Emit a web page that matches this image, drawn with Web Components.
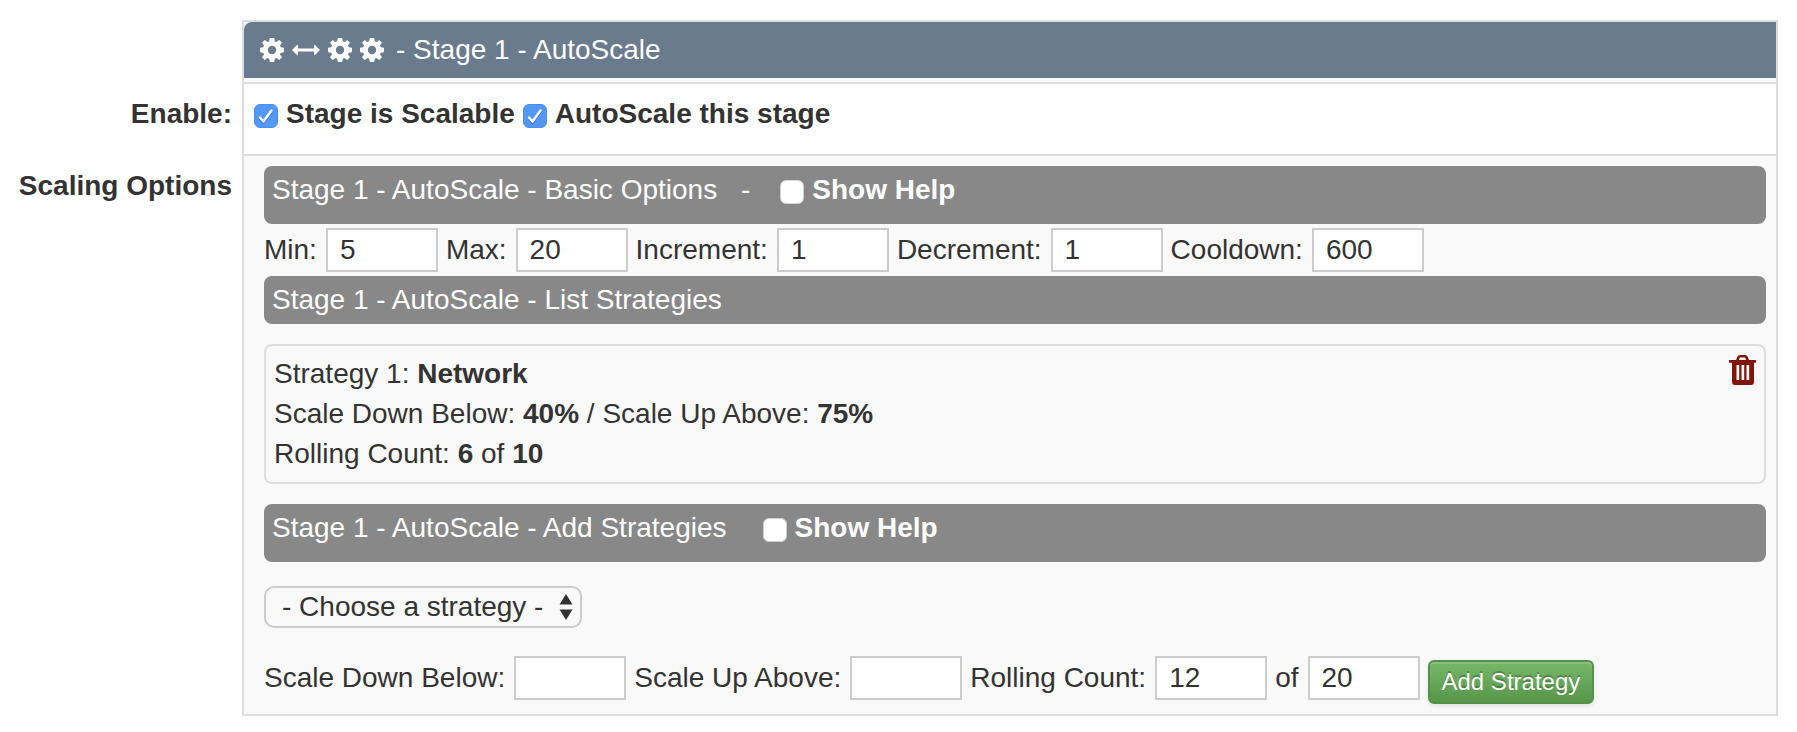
<!DOCTYPE html>
<html lang="en">
<head>
<meta charset="utf-8">
<title>Stage AutoScale</title>
<style>
  body { margin: 0; background: #fff; color: #333; font: 28px/40px "Liberation Sans", Arial, sans-serif; }
</style>
</head>
<body>
<scale-form></scale-form>

<template id="t-form">
  <style>
    :host { display: block; padding: 20px 19px 16px 0; }
    .fields, .add { display: flex; align-items: flex-start; flex-wrap: wrap; gap: 8px; }
    .fields { margin: 4px 0; }
    .add { margin-top: 28px; }
    .checks { display: flex; gap: 8px; padding: 10px 10px 20px; }
    .options { padding: 10px 10px 10px 20px; }
    strategy-card { margin: 20px 0; }
    strategy-select { margin-top: 24px; }
    .dash { margin-left: 16px; }
    .adding { --help-gap: 36px; }
  </style>
  <form-row top>
    <stage-header slot="content">- Stage 1 - AutoScale</stage-header>
  </form-row>
  <form-row label="Enable:" plain>
    <div slot="content" class="checks">
      <check-field checked>Stage is Scalable</check-field>
      <check-field checked>AutoScale this stage</check-field>
    </div>
  </form-row>
  <form-row label="Scaling Options">
    <div slot="content" class="options">
      <section-bar tall>Stage 1 - AutoScale - Basic Options <span class="dash">-</span> <check-field slot="help">Show Help</check-field></section-bar>
      <div class="fields">
        <number-field label="Min:" value="5"></number-field>
        <number-field label="Max:" value="20"></number-field>
        <number-field label="Increment:" value="1"></number-field>
        <number-field label="Decrement:" value="1"></number-field>
        <number-field label="Cooldown:" value="600"></number-field>
      </div>
      <section-bar>Stage 1 - AutoScale - List Strategies</section-bar>
      <strategy-card>
        <div>Strategy 1: <b>Network</b></div>
        <div>Scale Down Below: <b>40%</b> / Scale Up Above: <b>75%</b></div>
        <div>Rolling Count: <b>6</b> of <b>10</b></div>
      </strategy-card>
      <section-bar tall class="adding">Stage 1 - AutoScale - Add Strategies <check-field slot="help">Show Help</check-field></section-bar>
      <strategy-select></strategy-select>
      <div class="add">
        <number-field label="Scale Down Below:" value=""></number-field>
        <number-field label="Scale Up Above:" value=""></number-field>
        <number-field label="Rolling Count:" value="12"></number-field>
        <number-field label="of" value="20"></number-field>
        <action-button>Add Strategy</action-button>
      </div>
    </div>
  </form-row>
</template>

<template id="t-row">
  <style>
    :host { display: grid; grid-template-columns: 242px minmax(0, 1fr); }
    .label { font-weight: bold; text-align: right; padding: 10px 10px 0 0; }
    .cell { border: 2px solid #ddd; border-top: 0; background: #f9f9f9; }
    :host([plain]) .cell { background: #fff; }
    :host([top]) .cell { border-top: 2px solid #ddd; padding-bottom: 4px; }
  </style>
  <div class="label"></div>
  <div class="cell"><slot name="content"></slot></div>
</template>

<template id="t-header">
  <style>
    :host { display: flex; align-items: center; gap: 12px; padding: 8px 16px; background: #697b8c; color: #fff; border-radius: 8px 0 0 0; }
    .icons { display: flex; align-items: center; gap: 8px; }
    svg { display: block; fill: currentColor; }
  </style>
  <span class="icons">
    <svg width="24" height="24" viewBox="0 0 24 24"><path id="g" fill-rule="evenodd" d="M9.800 0h4.400l.6 3.400 1.700.7L19.300 2 22 4.700l-2 2.800.7 1.700 3.300.6v4.400l-3.300.6-.7 1.700 2 2.800-2.700 2.700-2.800-2-1.700.7-.6 3.300H9.800l-.6-3.300-1.700-.7-2.800 2L2 19.300l2-2.800-.7-1.700L0 14.200V9.800l3.300-.6L4 7.500 2 4.700 4.700 2l2.800 2 1.700-.7zM12 7.800a4.200 4.200 0 1 0 0 8.400a4.200 4.200 0 1 0 0-8.400z"/></svg>
    <svg width="28" height="24" viewBox="0 0 28 24"><path d="M0 12l5-5q1-.6 1 .5v3h16v-3q0-1.100 1-.5l5 5-5 5q-1 .6-1-.5v-3H6v3q0 1.100-1 .5z"/></svg>
    <svg width="24" height="24" viewBox="0 0 24 24"><use href="#g"/></svg>
    <svg width="24" height="24" viewBox="0 0 24 24"><use href="#g"/></svg>
  </span>
  <span><slot></slot></span>
</template>

<template id="t-check">
  <style>
    :host { display: inline-block; }
    label { display: flex; gap: 8px; font-weight: bold; white-space: nowrap; }
    input { appearance: none; flex: none; box-sizing: border-box; width: 24px; height: 24px; margin: 10px 0 0; border: 1px solid #d0d0d0; border-radius: 6px; background: #fff; }
    input:checked { border-color: #4a8ff0; background: #5498f5 url("data:image/svg+xml,%3Csvg xmlns='http://www.w3.org/2000/svg' viewBox='0 0 22 22' fill='none' stroke-width='2.4' stroke-linecap='round' stroke-linejoin='round'%3E%3Cpath d='M5 14l3.500 4L16.500 7' stroke='%233a76c8'/%3E%3Cpath d='M5 12.500l3.500 4L16.500 5.500' stroke='white'/%3E%3C/svg%3E"); }
  </style>
  <label><input type="checkbox"><span><slot></slot></span></label>
</template>

<template id="t-bar">
  <style>
    :host { display: flex; gap: var(--help-gap, 30px); padding: 4px 8px; background: #888; color: #fff; border-radius: 8px; }
    :host([tall]) { padding-bottom: 14px; }
  </style>
  <span><slot></slot></span>
  <slot name="help"></slot>
</template>

<template id="t-number">
  <style>
    :host { display: block; }
    label { display: flex; align-items: center; gap: 9px; white-space: nowrap; }
    input { box-sizing: border-box; width: 112px; height: 44px; margin: 0; padding: 0 12px; border: 2px solid #ccc; border-radius: 0; background: #fff; color: inherit; font: inherit; }
  </style>
  <label><span></span><input type="text"></label>
</template>

<template id="t-card">
  <style>
    :host { display: flex; justify-content: space-between; align-items: flex-start; padding: 8px; border: 2px solid #ddd; border-radius: 8px; }
    button { margin: 0; padding: 0; border: 0; background: none; color: #7f150c; }
    svg { display: block; fill: currentColor; }
  </style>
  <div><slot></slot></div>
  <button type="button" aria-label="Delete strategy"><svg width="28" height="32" viewBox="0 0 28 32"><path fill-rule="evenodd" d="M1 6h7l1.500-3.500Q10.200 1 12 1h5q1.800 0 2.500 1.500L21 6h7v2.800h-2V28q0 3-3 3H7q-3 0-3-3V8.800H1zM11 6h7l-.8-2.400h-5.400zM8.500 11v15h2.700V11zm5 0v15h2.700V11zm5 0v15h2.700V11z"/></svg></button>
</template>

<template id="t-select">
  <style>
    :host { display: grid; width: 318px; }
    select, svg { grid-area: 1 / 1; }
    select { appearance: none; box-sizing: border-box; width: 100%; height: 42px; margin: 0; padding: 0 16px; border: 2px solid #ccc; border-radius: 10px; background: #f9f9f9; color: inherit; font: inherit; line-height: 36px; }
    svg { justify-self: end; align-self: center; margin-right: 9px; fill: #333; pointer-events: none; }
  </style>
  <select aria-label="Strategy"><option>- Choose a strategy -</option><option>Network</option></select>
  <svg width="14" height="26" viewBox="0 0 14 26"><path d="M7 0l6.500 10.500H.5zM7 26L.5 15.500h13z"/></svg>
</template>

<template id="t-button">
  <style>
    :host { display: block; margin-top: 4px; }
    button { display: block; box-sizing: border-box; height: 44px; margin: 0; padding: 0 12px; border: 2px solid #53924a; border-radius: 6px; background: linear-gradient(#76b868, #57964b); box-shadow: inset 0 2px 0 rgba(255,255,255,.15), 0 2px 4px rgba(0,0,0,.1); color: #fff; font: inherit; font-size: 24px; line-height: 36px; text-shadow: 0 -2px 0 rgba(0,0,0,.25); white-space: nowrap; }
  </style>
  <button type="button"><slot></slot></button>
</template>

<script>
  const define = (name, templateId, setup) =>
    customElements.define(name, class extends HTMLElement {
      constructor() {
        super();
        this.attachShadow({ mode: "open" })
          .append(document.getElementById(templateId).content.cloneNode(true));
      }
      connectedCallback() {
        if (setup) setup(this, this.shadowRoot);
      }
    });

  define("form-row", "t-row", (el, root) => {
    root.querySelector(".label").textContent = el.getAttribute("label") || "";
  });
  define("stage-header", "t-header");
  define("check-field", "t-check", (el, root) => {
    root.querySelector("input").checked = el.hasAttribute("checked");
  });
  define("section-bar", "t-bar");
  define("number-field", "t-number", (el, root) => {
    root.querySelector("span").textContent = el.getAttribute("label");
    root.querySelector("input").value = el.getAttribute("value");
  });
  define("strategy-card", "t-card");
  define("strategy-select", "t-select");
  define("action-button", "t-button");
  define("scale-form", "t-form");
</script>
</body>
</html>
